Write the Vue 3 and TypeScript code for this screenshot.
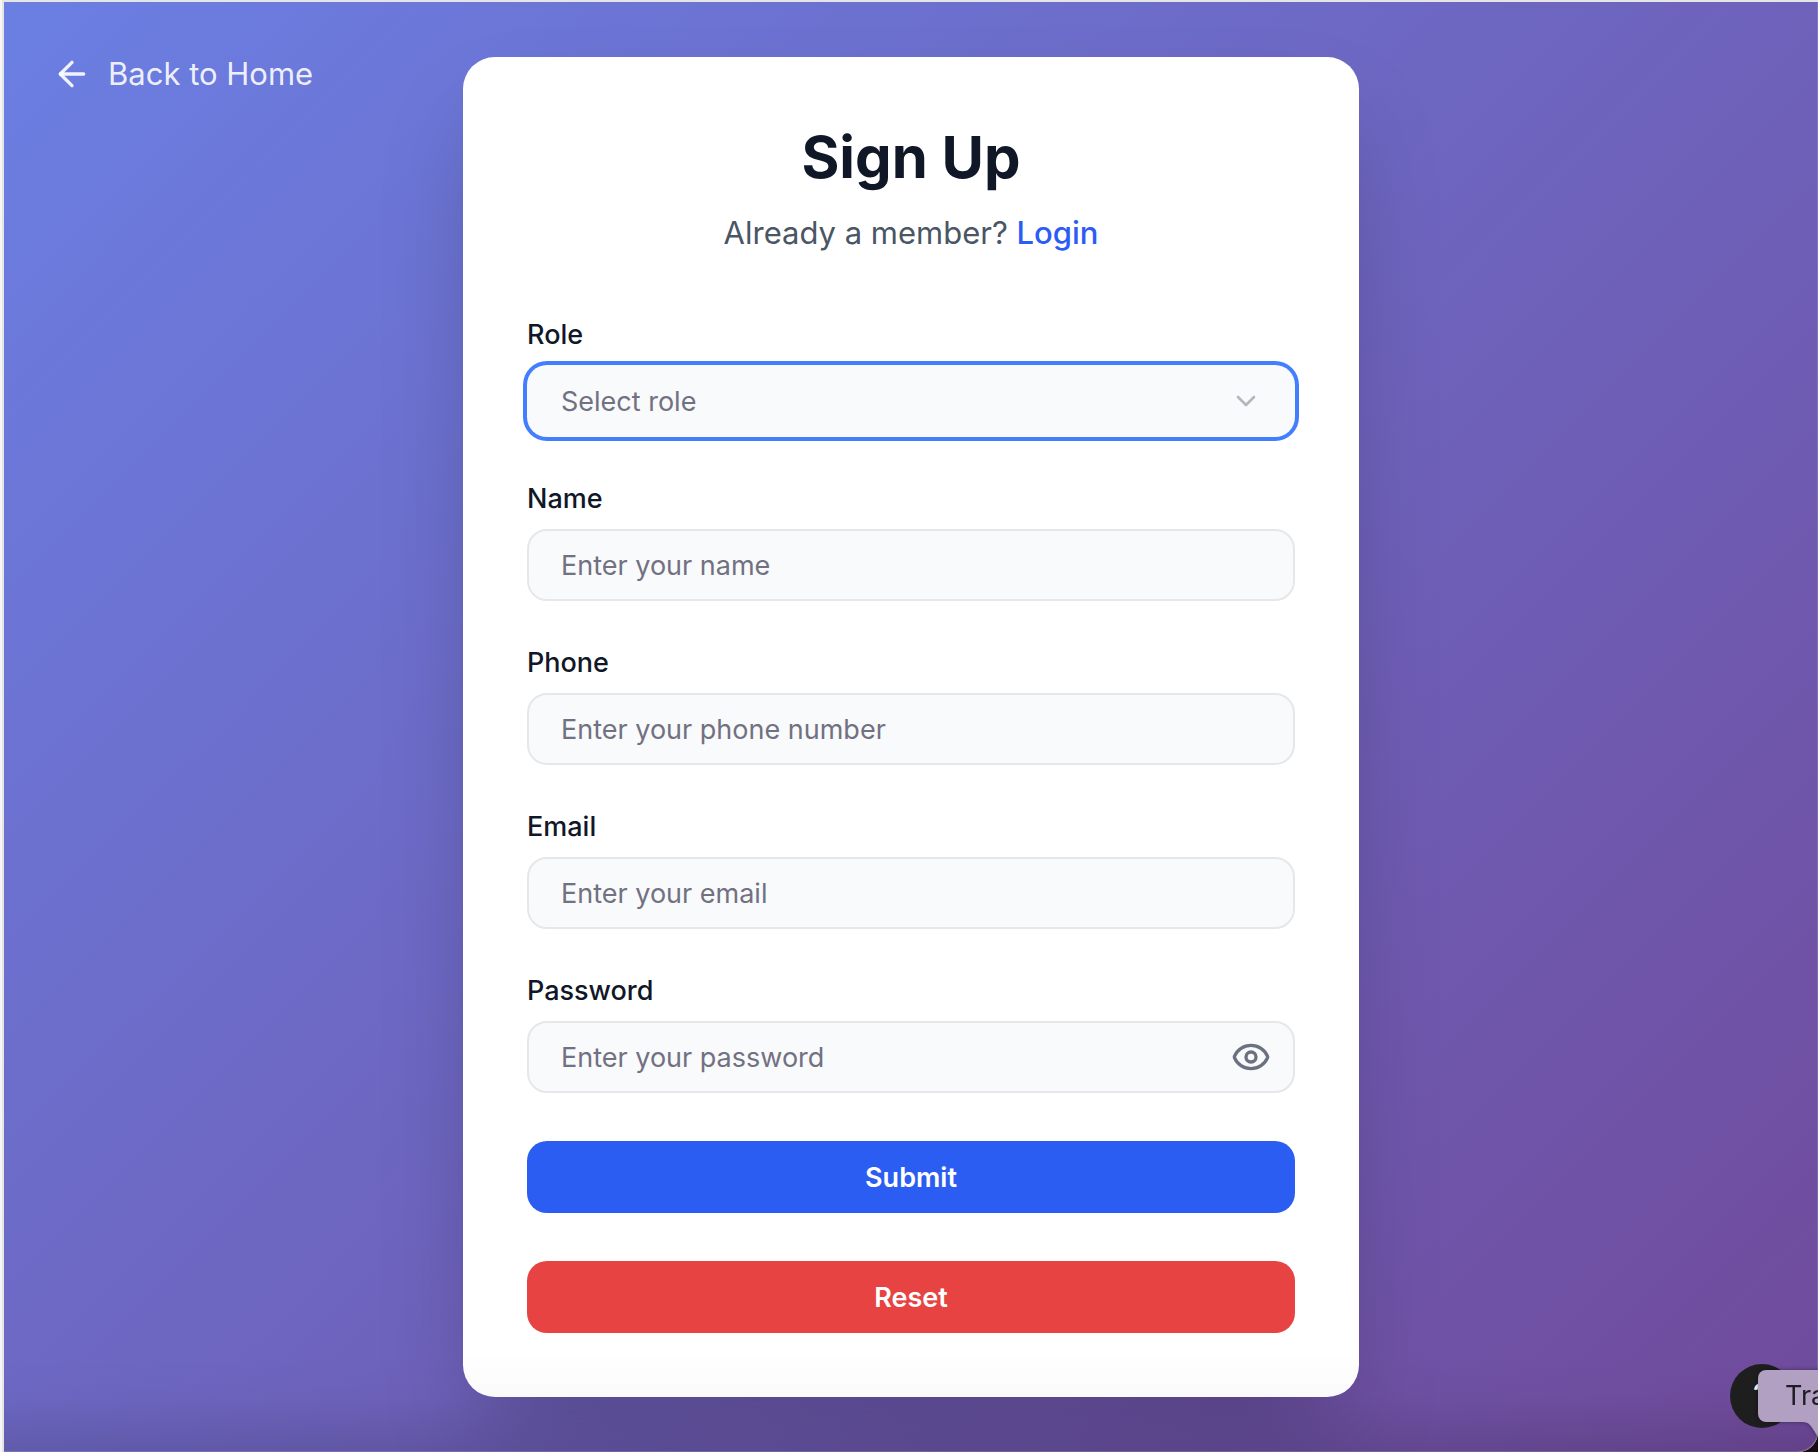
<script setup lang="ts">
import { reactive, ref } from 'vue'

interface Field {
  key: 'name' | 'phone' | 'email'
  label: string
  type: string
  placeholder: string
}

const fields: Field[] = [
  { key: 'name', label: 'Name', type: 'text', placeholder: 'Enter your name' },
  { key: 'phone', label: 'Phone', type: 'tel', placeholder: 'Enter your phone number' },
  { key: 'email', label: 'Email', type: 'email', placeholder: 'Enter your email' },
]

const form = reactive({ role: '', name: '', phone: '', email: '', password: '' })
const showPassword = ref(false)

function reset() {
  Object.assign(form, { role: '', name: '', phone: '', email: '', password: '' })
}
</script>

<template>
  <div class="window">
    <div class="page">
      <a class="back" href="#home">
        <svg width="40" height="40" viewBox="0 0 24 24" fill="none" stroke="currentColor" stroke-width="2" stroke-linecap="round" stroke-linejoin="round" aria-hidden="true">
          <path d="m12 19-7-7 7-7" /><path d="M19 12H5" />
        </svg>
        <span>Back to Home</span>
      </a>

      <main class="card">
        <header class="head">
          <h1>Sign Up</h1>
          <p>Already a member? <a href="#login">Login</a></p>
        </header>

        <form class="form" @submit.prevent>
          <div class="field">
            <label for="role">Role</label>
            <div class="control">
              <select id="role" v-model="form.role" class="box focused">
                <option value="" disabled>Select role</option>
              </select>
              <svg class="chevron" width="32" height="32" viewBox="0 0 24 24" fill="none" stroke="currentColor" stroke-width="2" stroke-linecap="round" stroke-linejoin="round" aria-hidden="true">
                <path d="m6 9 6 6 6-6" />
              </svg>
            </div>
          </div>

          <div v-for="f in fields" :key="f.key" class="field">
            <label :for="f.key">{{ f.label }}</label>
            <input :id="f.key" v-model="form[f.key]" class="box" :type="f.type" :placeholder="f.placeholder" />
          </div>

          <div class="field">
            <label for="password">Password</label>
            <div class="control">
              <input id="password" v-model="form.password" class="box" :type="showPassword ? 'text' : 'password'" placeholder="Enter your password" />
              <button class="eye" type="button" aria-label="Show password" @click="showPassword = !showPassword">
                <svg width="40" height="40" viewBox="0 0 24 24" fill="none" stroke="currentColor" stroke-width="2" stroke-linecap="round" stroke-linejoin="round" aria-hidden="true">
                  <path d="M2.062 12.348a1 1 0 0 1 0-.696 10.75 10.75 0 0 1 19.876 0 1 1 0 0 1 0 .696 10.75 10.75 0 0 1-19.876 0" />
                  <circle cx="12" cy="12" r="3" />
                </svg>
              </button>
            </div>
          </div>

          <button class="action submit" type="submit">Submit</button>
          <button class="action reset" type="button" @click="reset">Reset</button>
        </form>
      </main>

      <div class="shade"></div>
    </div>

    <button class="help" type="button" aria-label="Help">?</button>
    <div class="tip">
      <span>Trash</span>
      <svg class="tail" width="48" height="32" viewBox="0 0 48 32" aria-hidden="true">
        <path d="M0 0C8 0 9 4 16 15L24 24V0Z" fill="#b1a0c1" />
      </svg>
    </div>
  </div>
</template>

<style>
body {
  margin: 0;
  background: #1a0c10;
}
</style>

<style scoped>
* {
  box-sizing: border-box;
}

.window {
  position: relative;
  min-height: 100vh;
  display: flex;
  overflow: hidden;
  padding: 2px 0 0 2px;
  border-left: 2px solid #f6f6f6;
  border-bottom-right-radius: 20px;
  background: #e5e5e5;
  font-family: Inter, "Liberation Sans", sans-serif;
  color: #101828;
}

.page {
  position: relative;
  flex: 1;
  display: flex;
  justify-content: center;
  align-items: flex-start;
  padding: 55px 48px;
  border-bottom-right-radius: 20px;
  overflow: hidden;
  background: linear-gradient(135deg, #6b7fe3 0%, #704a9b 100%);
}

.back {
  position: absolute;
  top: 48px;
  left: 48px;
  display: flex;
  align-items: center;
  gap: 16px;
  color: rgba(255, 255, 255, 0.9);
  font-size: 31px;
  line-height: 48px;
  text-decoration: none;
}

.card {
  width: 100%;
  max-width: 896px;
  padding: 64px;
  border-radius: 32px;
  background: #fff;
  box-shadow: 0 50px 100px -24px rgba(0, 0, 0, 0.25);
}

.head {
  margin-bottom: 64px;
  text-align: center;
}

h1 {
  margin: 0 0 16px;
  font-size: 58px;
  font-weight: 700;
  line-height: 72px;
}

p {
  margin: 0;
  color: #4a5565;
  font-size: 31px;
  line-height: 48px;
}

p a {
  color: #2b5df5;
  font-weight: 500;
  text-decoration: none;
}

.form {
  display: flex;
  flex-direction: column;
  gap: 48px;
}

.field {
  display: flex;
  flex-direction: column;
  gap: 16px;
}

label {
  font-size: 27px;
  font-weight: 500;
  line-height: 28px;
}

.control {
  position: relative;
  display: flex;
}

.box {
  width: 100%;
  height: 72px;
  padding: 0 32px;
  border: 2px solid #e5e7eb;
  border-radius: 20px;
  background: #f9fafb;
  color: #717182;
  font: 400 27px Inter, "Liberation Sans", sans-serif;
  outline: none;
  appearance: none;
}

.box::placeholder {
  color: #717182;
  opacity: 1;
}

.focused {
  border-color: transparent;
  box-shadow: 0 0 0 4px #437eff;
}

.chevron {
  position: absolute;
  right: 33px;
  top: 20px;
  color: #b4b7bd;
  pointer-events: none;
}

.eye {
  position: absolute;
  right: 24px;
  top: 16px;
  display: flex;
  padding: 0;
  border: 0;
  background: none;
  color: #6a7282;
}

.action {
  height: 72px;
  padding: 0;
  border: 0;
  border-radius: 20px;
  color: #fff;
  font: 600 27px Inter, "Liberation Sans", sans-serif;
}

.submit {
  background: #2b5df3;
}

.reset {
  background: #e74342;
}

.shade {
  position: absolute;
  inset: 0;
  border-bottom-right-radius: 20px;
  background: linear-gradient(to top, rgba(0, 0, 0, 0.12), rgba(0, 0, 0, 0.02) 55px, transparent 100px);
  box-shadow: inset -1px -1px 0 rgba(255, 255, 255, 0.15);
  pointer-events: none;
}

.help {
  position: absolute;
  right: 24px;
  bottom: 24px;
  width: 64px;
  height: 64px;
  padding: 0;
  border: 0;
  border-radius: 50%;
  background: #1e1e1e;
  color: #fff;
  font: 400 36px Inter, "Liberation Sans", sans-serif;
}

.tip {
  position: absolute;
  right: -52px;
  bottom: 30px;
  width: 112px;
  height: 52px;
  padding-left: 27px;
  border-radius: 8px;
  background: #b1a0c1;
  color: #201c26;
  font-size: 27px;
  line-height: 52px;
  filter: drop-shadow(0 0 2px rgba(0, 0, 0, 0.4));
}

.tail {
  position: absolute;
  top: 52px;
  left: 44px;
}
</style>
